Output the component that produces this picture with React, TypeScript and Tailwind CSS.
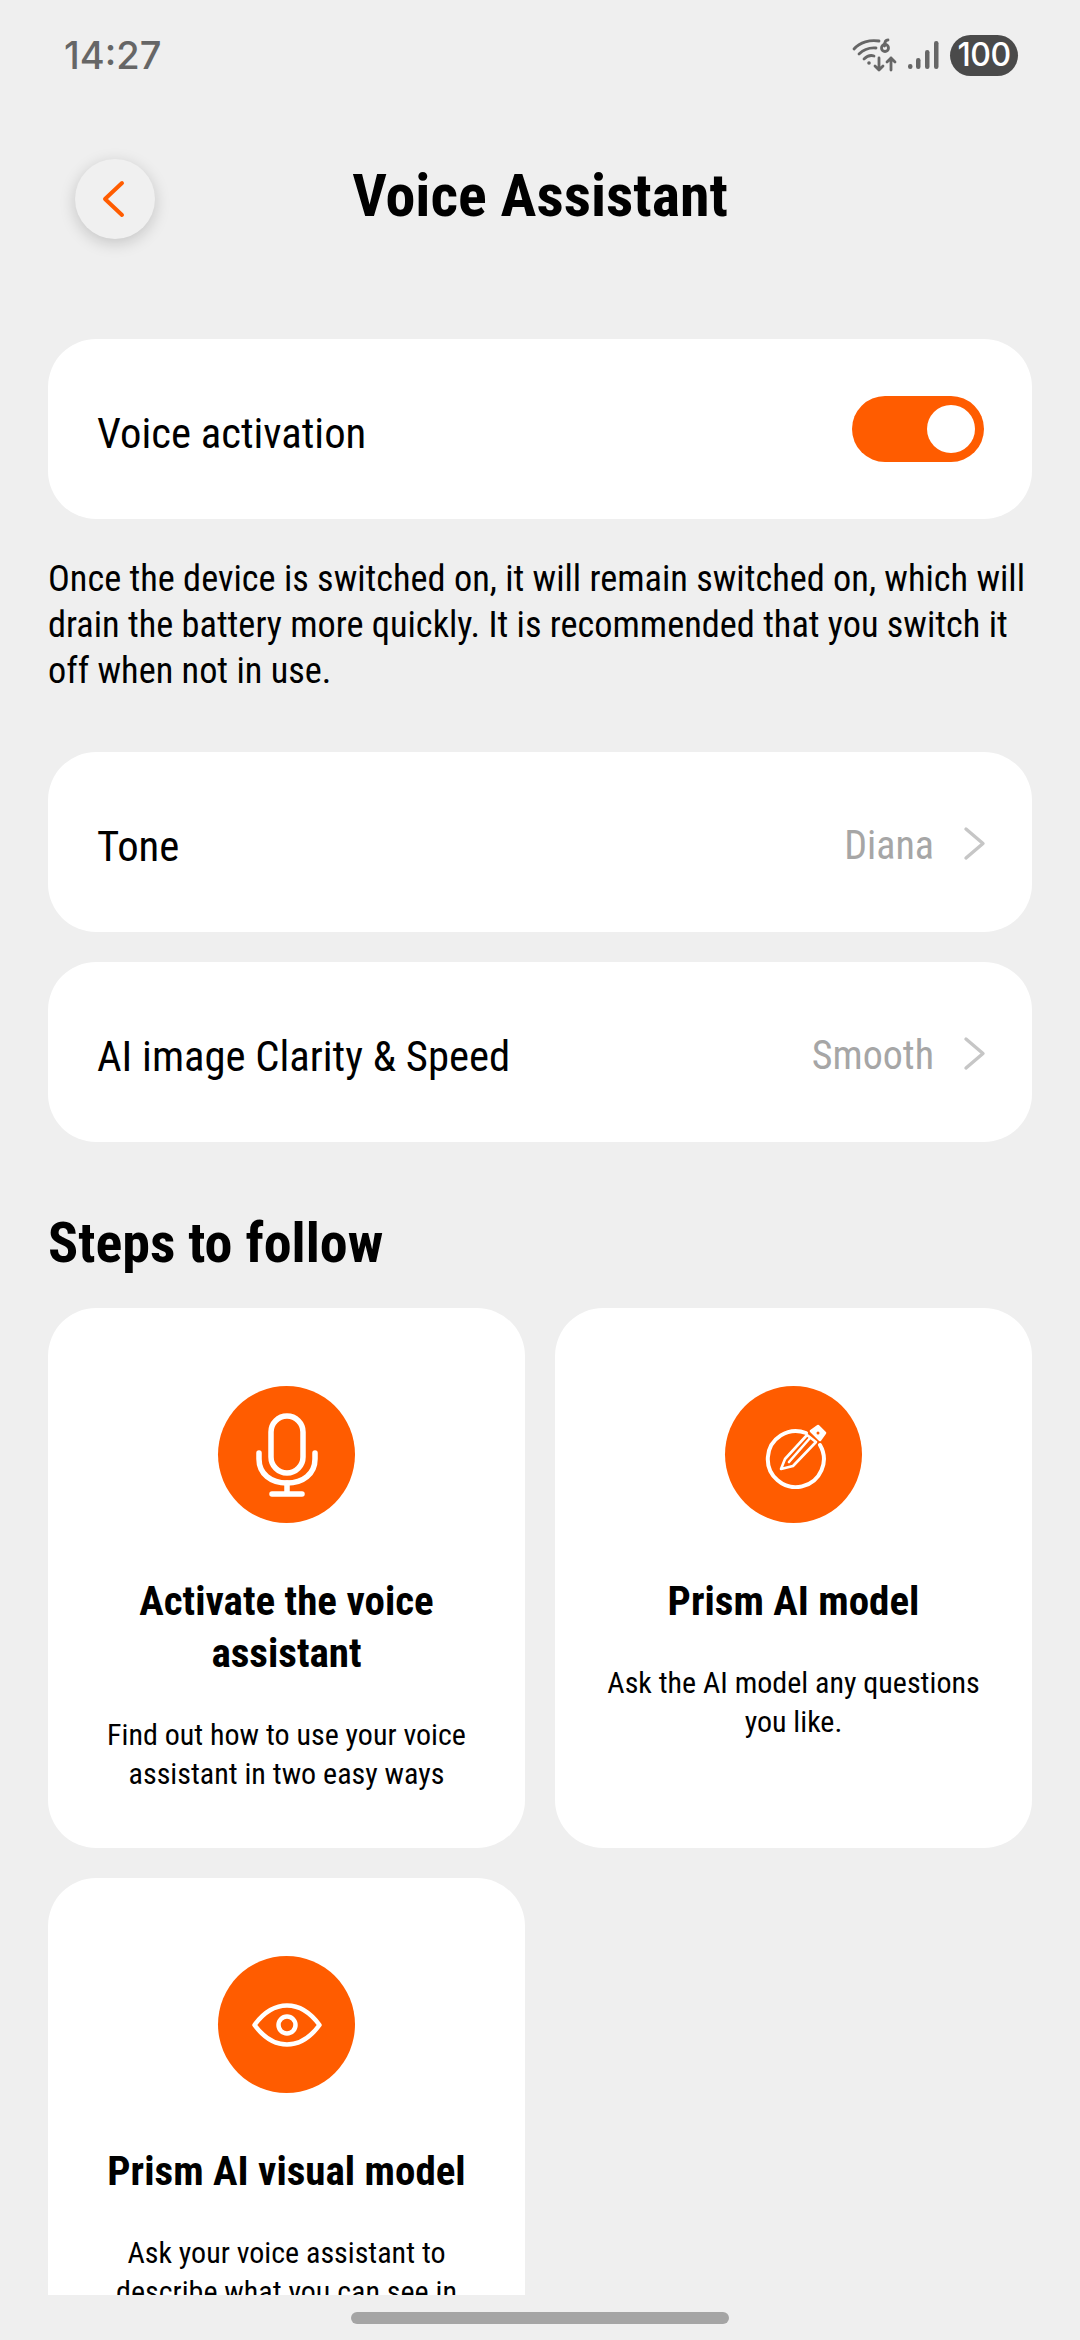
const orange = "bg-[#ff5c00]";

function WifiIcon() {
  return (
    <svg className="w-[46px] h-[34px]" viewBox="0 0 46 34" fill="none" stroke="#666666" strokeWidth="2.8" strokeLinecap="round" strokeLinejoin="round">
      <path d="M2 11C8 4 18 1.500 27 3" />
      <path d="M7 16C12 11 18 9.500 24 10" />
      <path d="M12 21c3-3 7-4 10-3" />
      <circle cx="17" cy="25" r="1.8" fill="#666666" stroke="none" />
      <circle cx="33" cy="10" r="3.5" />
      <path d="M36 2c-2 0-3.500 2-3.500 6" />
      <path d="M27 20v12M23 28l4 4 4-4" />
      <path d="M39 32V20M35 24l4-4 4 4" />
    </svg>
  );
}

function SignalIcon() {
  return (
    <svg className="w-[32px] h-[30px]" viewBox="0 0 32 30" fill="#666666">
      <rect x="1" y="24" width="4.500" height="5" rx="2.200" />
      <rect x="9" y="18" width="4.500" height="11" rx="2.200" />
      <rect x="18" y="10" width="4.500" height="19" rx="2.200" />
      <rect x="27" y="1" width="4.500" height="28" rx="2.200" />
    </svg>
  );
}

function StatusBar() {
  return (
    <div className="flex items-center justify-between h-[110px] pl-[64px] pr-[62px]">
      <span className="font-['Inter'] font-medium text-[38px] text-[#666666]">14:27</span>
      <div className="flex items-center">
        <WifiIcon />
        <div className="ml-[9px] mr-[11px] flex"><SignalIcon /></div>
        <div className="w-[68px] h-[41px] rounded-full bg-[#4a4a4a] flex items-center justify-center font-['Inter'] font-medium text-[32px] text-white tracking-[-0.5px]">100</div>
      </div>
    </div>
  );
}

function Chevron() {
  return (
    <svg className="w-[23px] h-[35px] ml-[29px] mt-[2px]" viewBox="0 0 23 35" fill="none" stroke="#c6c6c6" strokeWidth="3.4" strokeLinecap="round" strokeLinejoin="round">
      <path d="M3 3l17 14.500L3 32" />
    </svg>
  );
}

function Row({ label, value }: { label: string; value: string }) {
  return (
    <div className="bg-white rounded-[48px] h-[180px] mx-[48px] pl-[49px] pr-[46px] flex items-center justify-between">
      <span className="text-[42.700px] text-black mt-[8px]">{label}</span>
      <div className="flex items-center">
        <span className="text-[40px] text-[#a6a6a6] mt-[8px]">{value}</span>
        <Chevron />
      </div>
    </div>
  );
}

function StepCard({ icon, title, desc }: { icon: React.ReactNode; title: string; desc: string }) {
  return (
    <div className="bg-white rounded-[48px] h-[540px] px-[40px] pt-[78px] flex flex-col items-center text-center">
      <div className={`w-[137px] h-[137px] rounded-full shrink-0 flex items-center justify-center ${orange}`}>{icon}</div>
      <div className="mt-[52px] text-[41px] leading-[52px] font-bold text-black">{title}</div>
      <div className="mt-[36px] text-[30px] leading-[39px] text-black">{desc}</div>
    </div>
  );
}

function MicIcon() {
  return (
    <svg className="w-[62px] h-[84px]" viewBox="0 0 62 84" fill="none" stroke="white" strokeWidth="5.500" strokeLinecap="round">
      <rect x="15" y="3" width="32" height="57" rx="16" />
      <path d="M3 40v6c0 15 12 24 28 24s28-9 28-24v-6" />
      <path d="M31 70v11M16 81h30" />
    </svg>
  );
}

function PencilIcon() {
  return (
    <svg className="w-[68px] h-[68px]" viewBox="-2 -2 68 68" fill="none" stroke="white" strokeWidth="2.600" strokeLinecap="round" strokeLinejoin="round">
      <path d="M44 10A28 28 0 1 0 58 22" strokeWidth="4" />
      <path d="M19 46l4-10 22-24 9 7-23 24z" fill="#ff5c00" />
      <path d="M27 39l21-24" />
      <path d="M49 8l7-5 7 7-5 7z" fill="white" />
      <circle cx="56" cy="10" r="1.500" fill="#ff5c00" stroke="none" />
    </svg>
  );
}

function EyeIcon() {
  return (
    <svg className="w-[70px] h-[44px]" viewBox="0 0 70 44" fill="none" stroke="white" strokeWidth="4.500" strokeLinejoin="round">
      <path d="M2.500 22C12 9 23 2.500 35 2.500S58 9 67.500 22C58 35 47 41.500 35 41.500S12 35 2.500 22z" />
      <circle cx="35" cy="22" r="8.500" />
    </svg>
  );
}

export default function App() {
  return (
    <div className="relative w-[1080px] h-[2340px] bg-[#efefef] flex flex-col overflow-hidden font-['Roboto_Condensed','Roboto',sans-serif]">
      <StatusBar />

      <div className="flex items-center h-[80px] mt-[49px] pl-[75px]">
        <div className="w-[80px] h-[80px] rounded-full bg-[#f0f0f0] shadow-[0_4px_16px_rgba(0,0,0,0.18)] flex items-center justify-center">
          <svg className="w-[24px] h-[38px] mr-[4px]" viewBox="0 0 24 38" fill="none" stroke="#ff5c00" strokeWidth="4" strokeLinecap="round" strokeLinejoin="round">
            <path d="M21 3L4 19l17 16" />
          </svg>
        </div>
        <h1 className="flex-1 text-center mr-[155px] -mt-[6px] text-[60px] font-bold text-black">Voice Assistant</h1>
      </div>

      <main className="flex-1 min-h-0 overflow-hidden mt-[100px] mb-[45px]">
        <div className="bg-white rounded-[48px] h-[180px] mx-[48px] pl-[49px] pr-[48px] flex items-center justify-between">
          <span className="text-[42.700px] text-black mt-[8px]">Voice activation</span>
          <div className={`w-[132px] h-[66px] rounded-full flex items-center justify-end pr-[9px] ${orange}`}>
            <div className="w-[48px] h-[48px] rounded-full bg-white" />
          </div>
        </div>

        <p className="mx-[48px] mt-[37px] text-[36.300px] leading-[46px] text-black">
          Once the device is switched on, it will remain switched on, which will drain the battery more quickly. It is recommended that you switch it off when not in use.
        </p>

        <div className="mt-[58px] flex flex-col gap-[30px]">
          <Row label="Tone" value="Diana" />
          <Row label="AI image Clarity & Speed" value="Smooth" />
        </div>

        <h2 className="mx-[48px] mt-[66px] text-[56px] leading-[70px] font-bold text-black">Steps to follow</h2>

        <div className="mx-[48px] mt-[30px] grid grid-cols-2 gap-[30px]">
          <StepCard icon={<MicIcon />} title="Activate the voice assistant" desc="Find out how to use your voice assistant in two easy ways" />
          <StepCard icon={<PencilIcon />} title="Prism AI model" desc="Ask the AI model any questions you like." />
          <StepCard icon={<EyeIcon />} title="Prism AI visual model" desc="Ask your voice assistant to describe what you can see in" />
        </div>
      </main>

      <div className="absolute left-[351px] top-[2312px] w-[378px] h-[12px] rounded-full bg-[#a5a5a5]" />
    </div>
  );
}
